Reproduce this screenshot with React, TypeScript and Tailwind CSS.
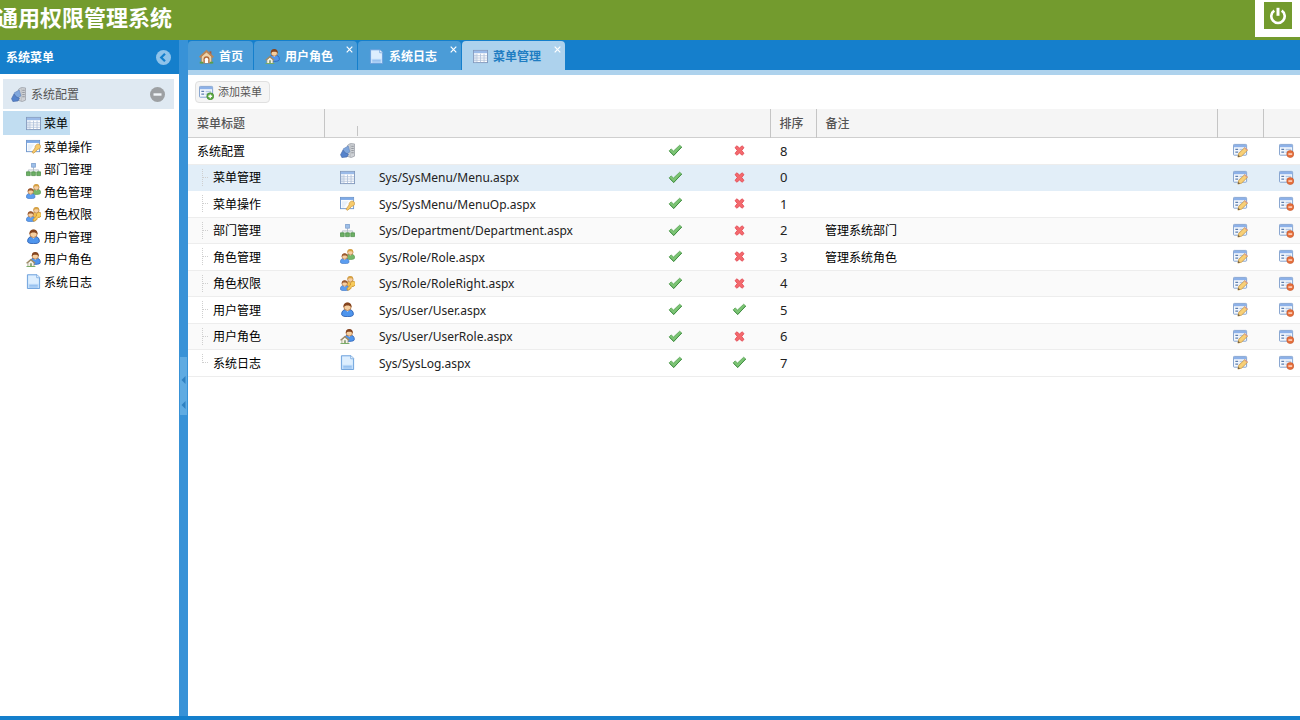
import React, { useState } from "react";

type IconName =
  | "config" | "table" | "key" | "org" | "group" | "groupKey"
  | "user" | "userHome" | "doc" | "home" | "tick" | "cross"
  | "edit" | "remove" | "add";

function Person({ x, y, hair, body, edge }: { x: number; y: number; hair: string; body: string; edge: string }) {
  return (
    <g transform={`translate(${x} ${y})`}>
      <path d="M.4 9.400C.4 6.600 2 5.400 5 5.400s4.600 1.200 4.600 4c0 1.200-1.800 1.800-4.600 1.800S.4 10.600.4 9.400Z" fill={body} stroke={edge} strokeWidth=".7" />
      <path d="M3.600 5.700 5 7.300l1.400-1.600Z" fill="#fff" />
      <circle cx="5" cy="3.500" r="2.900" fill="#f6cfa0" stroke="#a86a3a" strokeWidth=".6" />
      <path d="M1.900 3.900C1.600 1.300 3.100.1 5 .1s3.400 1.200 3.100 3.800C7.300 2.800 6.600 2.400 5 2.400s-2.300.4-3.100 1.500Z" fill={hair} />
    </g>
  );
}

function FormBase() {
  return (
    <>
      <rect x=".5" y="1.500" width="14" height="11.500" rx=".8" fill="#f4f8fd" stroke="#7f9fcd" />
      <path d="M1 2h13v2.500H1Z" fill="#8db1e8" />
      <path d="M2.500 6.800h3M2.500 9.800h3" stroke="#5f7fae" strokeWidth="1.300" />
      <path d="M7 6.800h6M7 9.800h5" stroke="#b4c8e4" strokeWidth="1.600" />
    </>
  );
}

function Key() {
  return (
    <path d="M11.500 5.500a2.700 2.700 0 0 1 2 4.800c-.7.700-1.500.8-2.300.7l-1.400 1.400-.2 1.200-1.400.2-.4 1.200H5.600v-1.900l3.600-3.500c-.5-1.800.7-3.900 2.300-4.100Z" fill="#f7cb5c" stroke="#c48a28" strokeWidth=".8" />
  );
}

function House() {
  return (
    <>
      <path d="M2 11.500v4h6.500v-4L5.200 8.800Z" fill="#f7f2e6" stroke="#8b8f73" strokeWidth=".7" />
      <path d="m.6 12 4.600-4 4.600 4" fill="none" stroke="#a08a66" strokeWidth="1.400" />
      <path d="M4.300 12h2v3.500h-2Z" fill="#8ea57a" />
      <path d="M.5 15.500h9.500" stroke="#74ad62" />
    </>
  );
}

function Icon({ name }: { name: IconName }) {
  return (
    <svg width="15" height="15" viewBox="0 0 16 16" className="block shrink-0" aria-hidden="true">
      {name === "config" && (
        <>
          <path d="m8 2.500 3-2 4.500.5v13L12 15.500l-5-1.500Z" fill="#cfd2d6" stroke="#9a9ea5" strokeWidth=".8" />
          <path d="M11 1v14" stroke="#b3b6bb" strokeWidth=".7" />
          <path d="M12 3.500h2.700M12 5.800h2.700M12 8.100h2.700M12 10.400h2.700" stroke="#878c93" strokeWidth=".9" />
          <path d="m3.200 6.500 5.600-3.300 1.700 6.300-4.500 3Z" fill="#7fa6dc" stroke="#6688bd" strokeWidth=".7" />
          <path d="M.6 12.500 3.200 7.500l2.300 3 3.500 1.500-1.500 2.800-5.500.7Z" fill="#5583cc" stroke="#4669a8" strokeWidth=".7" />
        </>
      )}
      {name === "table" && (
        <>
          <rect x=".5" y="1.500" width="15" height="13" fill="#fff" stroke="#8299bd" />
          <path d="M1 2h14v2.500H1Z" fill="#9bbbe8" />
          <path d="M1 4.500h2.500V14H1Z" fill="#e2ebf7" />
          <path d="M1 7.200h14M1 9.600h14M1 12h14M4.200 5v9M8 5v9M11.800 5v9" stroke="#b2c2da" strokeWidth=".9" />
        </>
      )}
      {name === "key" && (
        <>
          <rect x=".5" y="1.500" width="14" height="12" fill="#fbfdff" stroke="#7097cc" />
          <path d="M1 2h13v2.200H1Z" fill="#7eaae7" />
          <path d="M2 5.500h7l-5 7H2Z" fill="#e8f0fa" />
          <path d="M12.500 5.500a2.500 2.500 0 0 1 3 2.500c0 2-1.500 3-3 2.800L9.700 14l-2.200 1.300-1-1.300 3.200-4.500c-.2-2 .8-3.500 2.800-4Z" fill="#f7cb6c" stroke="#cc9a43" strokeWidth=".8" />
        </>
      )}
      {name === "org" && (
        <>
          <path d="M8 5.500v3M2.500 11V8.500h11V11M8 8.500V11" fill="none" stroke="#b3bcc6" />
          <rect x="6" y="1.500" width="4" height="4" fill="#9dbfe8" stroke="#7a9ccc" strokeWidth=".8" />
          <path d="M.5 10.500h4v4h-4ZM6 10.500h4v4H6ZM11.500 10.500h4v4h-4Z" fill="#6db065" stroke="#4c8f4a" strokeWidth=".8" />
        </>
      )}
      {name === "group" && (
        <>
          <Person x={6} y={0} hair="#d7a344" body="#75b869" edge="#4f9549" />
          <Person x={0} y={4.500} hair="#9b5a30" body="#5b9df0" edge="#3f74c0" />
        </>
      )}
      {name === "groupKey" && (
        <>
          <Person x={6} y={0} hair="#d7a344" body="#f0bd50" edge="#c4943b" />
          <Person x={0} y={4.500} hair="#9b5a30" body="#5b9df0" edge="#3f74c0" />
          <g transform="translate(2 0)"><Key /></g>
        </>
      )}
      {name === "user" && (
        <g transform="translate(1.200 .4) scale(1.360)">
          <Person x={0} y={0} hair="#84441f" body="#4f95ed" edge="#2b60b3" />
        </g>
      )}
      {name === "userHome" && (
        <>
          <g transform="translate(4 0) scale(1.180)">
            <Person x={0} y={0} hair="#84441f" body="#4f95ed" edge="#2b60b3" />
          </g>
          <House />
        </>
      )}
      {name === "doc" && (
        <>
          <path d="M1.500.8h10.300l2.700 2.700v12h-13Z" fill="#c5e0fb" stroke="#6a9fdb" />
          <path d="M2.500 1.800h8.500v2.500h2.500v6h-11Z" fill="#ddeefe" />
          <path d="M11.500 1v3h3" fill="#fff" stroke="#6a9fdb" strokeWidth=".8" />
          <path d="M3.500 12h9M3.500 13.800h9" stroke="#7fb1e8" strokeWidth=".9" />
        </>
      )}
      {name === "home" && (
        <>
          <path d="M11.200 2.500h2v4h-2Z" fill="#a95b3c" />
          <path d="M2.500 7.800 8 3l5.500 4.800V15h-11Z" fill="#eed3aa" stroke="#a0764d" strokeWidth=".7" />
          <path d="M.7 9 8 2.200 15.300 9" fill="none" stroke="#b98557" strokeWidth="2" />
          <path d="M4.800 15v-4a3.200 3.200 0 0 1 6.400 0v4Z" fill="#b06a3c" />
          <path d="M6.200 15v-4a1.800 1.800 0 0 1 3.600 0v4Z" fill="#fff" />
          <path d="M.8 14.500h3.700M11.500 14.500h3.700" stroke="#58a04a" strokeWidth="1.800" />
        </>
      )}
      {name === "tick" && (
        <>
          <path d="m1.300 8.300 2-2 2.600 2.300 6.500-6.200 2.300 1.900-8.600 9Z" fill="#7cc474" stroke="#5aa557" strokeWidth=".9" strokeLinejoin="round" />
          <path d="m1.500 8.800 4.600 4.500 8.500-9" fill="none" stroke="#3f8c41" />
        </>
      )}
      {name === "cross" && (
        <path d="M3.200 4.900 5.200 3 8 5.300 10.800 3l2 1.900L10.400 8l2.400 3.100-2 1.900L8 10.700 5.200 13l-2-1.900L5.600 8Z" fill="#f4696d" stroke="#e04a54" strokeWidth=".9" strokeLinejoin="round" />
      )}
      {name === "edit" && (
        <>
          <FormBase />
          <path d="m5.200 15 1-4 6.200-6 3 2.800-6.300 6.200Z" fill="#f8d077" stroke="#c39240" strokeWidth=".8" />
          <path d="m5.200 15 .6-2.100 1.700 1.500Z" fill="#5d5140" />
          <path d="m12.400 5 3 2.800" stroke="#d99a88" strokeWidth="1.300" />
        </>
      )}
      {name === "remove" && (
        <>
          <FormBase />
          <circle cx="12" cy="11.800" r="3.700" fill="#e8703c" stroke="#c0562b" strokeWidth=".7" />
          <path d="M10 11.800h4" stroke="#ffe3d5" strokeWidth="1.500" />
        </>
      )}
      {name === "add" && (
        <>
          <FormBase />
          <circle cx="12" cy="12" r="3.700" fill="#5fac43" stroke="#3d8130" strokeWidth=".7" />
          <path d="M10 12h4M12 10v4" stroke="#fff" strokeWidth="1.400" />
        </>
      )}
    </svg>
  );
}

const navItems: { icon: IconName; label: string }[] = [
  { icon: "table", label: "菜单" },
  { icon: "key", label: "菜单操作" },
  { icon: "org", label: "部门管理" },
  { icon: "group", label: "角色管理" },
  { icon: "groupKey", label: "角色权限" },
  { icon: "user", label: "用户管理" },
  { icon: "userHome", label: "用户角色" },
  { icon: "doc", label: "系统日志" },
];

const tabs: { icon: IconName; label: string; closable: boolean }[] = [
  { icon: "home", label: "首页", closable: false },
  { icon: "userHome", label: "用户角色", closable: true },
  { icon: "doc", label: "系统日志", closable: true },
  { icon: "table", label: "菜单管理", closable: true },
];

const rows: { title: string; icon: IconName; url: string; second: boolean; order: number; note: string }[] = [
  { title: "系统配置", icon: "config", url: "", second: false, order: 8, note: "" },
  { title: "菜单管理", icon: "table", url: "Sys/SysMenu/Menu.aspx", second: false, order: 0, note: "" },
  { title: "菜单操作", icon: "key", url: "Sys/SysMenu/MenuOp.aspx", second: false, order: 1, note: "" },
  { title: "部门管理", icon: "org", url: "Sys/Department/Department.aspx", second: false, order: 2, note: "管理系统部门" },
  { title: "角色管理", icon: "group", url: "Sys/Role/Role.aspx", second: false, order: 3, note: "管理系统角色" },
  { title: "角色权限", icon: "groupKey", url: "Sys/Role/RoleRight.aspx", second: false, order: 4, note: "" },
  { title: "用户管理", icon: "user", url: "Sys/User/User.aspx", second: true, order: 5, note: "" },
  { title: "用户角色", icon: "userHome", url: "Sys/User/UserRole.aspx", second: false, order: 6, note: "" },
  { title: "系统日志", icon: "doc", url: "Sys/SysLog.aspx", second: true, order: 7, note: "" },
];

function Sidebar() {
  return (
    <aside className="flex w-[179px] shrink-0 flex-col bg-white">
      <div className="flex h-[34px] items-center justify-between bg-[#157fcc] pl-1.5 pr-2">
        <h2 className="pt-0.5 text-xs font-bold text-white">系统菜单</h2>
        <button type="button" aria-label="收起菜单" className="block">
          <svg width="15" height="15" viewBox="0 0 15 15" className="block">
            <circle cx="7.500" cy="7.500" r="7.500" fill="#8fc3ea" />
            <path d="M9 3.700 5.200 7.500 9 11.300" fill="none" stroke="#157fcc" strokeWidth="2.200" />
          </svg>
        </button>
      </div>
      <div className="mt-[5px] ml-[3px] mr-[5px] flex h-[30px] items-center bg-[#dfe9f2] pl-2 pr-[9px]">
        <Icon name="config" />
        <span className="ml-[5px] flex-1 pt-0.5 text-xs text-[#555]">系统配置</span>
        <button type="button" aria-label="折叠" className="block">
          <svg width="15" height="15" viewBox="0 0 15 15" className="block">
            <circle cx="7.500" cy="7.500" r="7.500" fill="#9da0a3" />
            <path d="M3.500 7.500h8" stroke="#f2f6fa" strokeWidth="2.400" />
          </svg>
        </button>
      </div>
      <nav className="mt-0.5 ml-[3px]">
        <ul>
          {navItems.map((item, i) => (
            <li key={item.label} className={i === 0 ? "h-6" : "odd:h-[22px] even:h-[23px]"}>
              <a
                href="#"
                className={
                  i === 0
                    ? "flex h-full w-[67px] items-center gap-[3px] bg-[#c1ddf1] pl-[23px] text-xs text-black"
                    : "flex h-full items-center gap-[3px] pl-[23px] text-xs text-black"
                }
              >
                <Icon name={item.icon} />
                <span className="whitespace-nowrap pt-0.5">{item.label}</span>
              </a>
            </li>
          ))}
        </ul>
      </nav>
    </aside>
  );
}

function TabStrip() {
  const [active, setActive] = useState(3);
  return (
    <div className="border-b-[5px] border-[#add2ed] bg-[#157fcc] pt-px">
      <div role="tablist" className="flex h-[29px] gap-px">
        {tabs.map((tab, i) => (
          <div
            key={tab.label}
            className={i === active ? "relative rounded-t-sm bg-[#add2ed] text-[#1f7dc2]" : "relative rounded-t-sm bg-[#4b9cd7] text-white"}
          >
            <button
              type="button"
              role="tab"
              aria-selected={i === active}
              onClick={() => setActive(i)}
              className={
                tab.closable
                  ? "flex h-full items-center gap-[5px] pl-[11px] pr-6 pt-0.5 text-xs font-bold"
                  : "flex h-full items-center gap-[5px] pl-[11px] pr-2.5 pt-0.5 text-xs font-bold"
              }
            >
              <Icon name={tab.icon} />
              <span>{tab.label}</span>
            </button>
            {tab.closable && (
              <button type="button" aria-label={"关闭" + tab.label} className="absolute right-1 top-[5px] text-white">
                <svg width="7" height="7" viewBox="0 0 7 7" className="block">
                  <path d="m.7.7 5.600 5.600M6.300.7.7 6.300" stroke="currentColor" strokeWidth="1.200" />
                </svg>
              </button>
            )}
          </div>
        ))}
      </div>
    </div>
  );
}

function Branch({ last }: { last: boolean }) {
  return (
    <svg width="16" height="25" viewBox="0 0 16 25" className="block shrink-0" aria-hidden="true">
      <path d={last ? "M5.500 4v9" : "M5.500 4v17"} stroke="#cfcfcf" strokeDasharray="1 1" />
      <path d="M6 12.500h6" stroke="#cfcfcf" strokeDasharray="1 1" />
    </svg>
  );
}

function MenuTable() {
  const th = "border-r border-[#c5c5c5] p-0 pl-[9px] pt-0.5 text-left font-medium";
  return (
    <table className="w-full table-fixed border-collapse text-xs">
      <colgroup>
        <col className="w-[136px]" />
        <col className="w-[46px]" />
        <col className="w-[270px]" />
        <col className="w-[66px]" />
        <col className="w-16" />
        <col className="w-[46px]" />
        <col />
        <col className="w-[46px]" />
        <col className="w-[37px]" />
      </colgroup>
      <thead>
        <tr className="h-7 border-b border-[#cfcfcf] bg-[#f5f5f5] text-[#555]">
          <th className={th}>菜单标题</th>
          <th colSpan={4} className={th} aria-label="图标与地址">
            <div className="ml-[23px] mt-3.5 h-2.5 w-px bg-[#c5c5c5]" />
          </th>
          <th className={th}>排序</th>
          <th className={th}>备注</th>
          <th className={th} aria-label="编辑" />
          <th className="p-0" aria-label="删除" />
        </tr>
      </thead>
      <tbody>
        {rows.map((row, i) => (
          <tr
            key={row.title}
            className={
              i === 1
                ? "h-[26px] border-b border-[#e2eef8] bg-[#e2eef8]"
                : "h-[27px] border-b border-[#ededed] even:h-[26px] even:bg-[#fafafa]"
            }
          >
            <td className="p-0 pl-[9px]">
              <div className="flex h-[25px] items-center overflow-hidden text-black">
                {i > 0 && <Branch last={i === rows.length - 1} />}
                <span className="pt-0.5">{row.title}</span>
              </div>
            </td>
            <td className="p-0 pl-4"><Icon name={row.icon} /></td>
            <td className="p-0 pl-[9px] pt-0.5 text-[#222]">{row.url}</td>
            <td className="p-0 pl-7"><Icon name="tick" /></td>
            <td className="p-0 pl-[26px]"><Icon name={row.second ? "tick" : "cross"} /></td>
            <td className="p-0 pl-2.5 text-[13px] leading-5 text-[#222]">{row.order}</td>
            <td className="p-0 pl-[9px] pt-0.5 text-black">{row.note}</td>
            <td className="p-0 pl-4">
              <button type="button" aria-label={"编辑" + row.title} className="block"><Icon name="edit" /></button>
            </td>
            <td className="p-0 pl-4">
              <button type="button" aria-label={"删除" + row.title} className="block"><Icon name="remove" /></button>
            </td>
          </tr>
        ))}
      </tbody>
    </table>
  );
}

export default function App() {
  return (
    <div className="flex h-screen flex-col overflow-hidden bg-white font-['Noto_Sans','Noto_Sans_CJK_SC',sans-serif]">
      <header className="flex h-10 shrink-0 items-start justify-between bg-[#739b2e]">
        <h1 className="-ml-1 text-[22px] font-bold leading-[34px] text-white">通用权限管理系统</h1>
        <div className="bg-white pb-2 pl-[9px] pr-2 pt-0.5">
          <button type="button" aria-label="退出" className="flex h-[27px] w-7 items-center justify-center bg-[#739b2e]">
            <svg width="18" height="18" viewBox="0 0 18 18" className="block">
              <path d="M5.300 3.700a6.700 6.700 0 1 0 7.400 0" fill="none" stroke="#fff" strokeWidth="2.600" />
              <path d="M9 .8v8" stroke="#fff" strokeWidth="3" />
            </svg>
          </button>
        </div>
      </header>
      <div className="flex min-h-0 flex-1">
        <Sidebar />
        <div className="flex w-[9px] shrink-0 flex-col items-center bg-[#3892d7]">
          <button type="button" aria-label="收起侧栏" className="mt-[317px] block">
            <svg width="7" height="58" viewBox="0 0 7 58" className="block">
              <path d="M0 0h7v58H0Z" fill="#5fabe2" />
              <path d="M5.500 19v8L1.500 23ZM5.500 44v8L1.500 48Z" fill="#2f82c2" />
            </svg>
          </button>
        </div>
        <main className="min-w-0 flex-1 bg-white">
          <TabStrip />
          <div className="flex h-[34px] items-center px-[7px]">
            <button type="button" className="flex h-[22px] items-center gap-1 rounded-sm border border-[#e0e0e0] bg-[#f5f5f5] pl-[3px] pr-[7px] text-[11px] text-[#555]">
              <Icon name="add" />
              <span>添加菜单</span>
            </button>
          </div>
          <MenuTable />
        </main>
      </div>
      <footer className="h-1 shrink-0 bg-[#157fcc]" />
    </div>
  );
}
